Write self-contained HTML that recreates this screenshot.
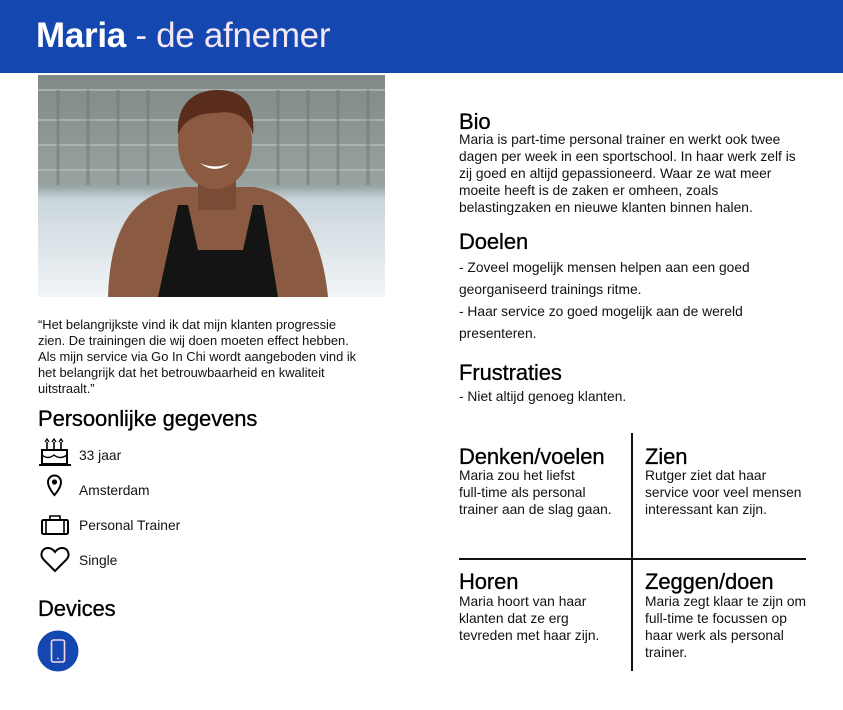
<!DOCTYPE html>
<html><head><meta charset="utf-8"><style>
*{margin:0;padding:0;box-sizing:border-box}
body{width:843px;height:710px;background:#fff;position:relative;overflow:hidden;font-family:"Liberation Sans",sans-serif;color:#111}
.a{position:absolute;white-space:nowrap}
.hd{position:absolute;left:0;top:0;width:843px;height:73px;background:#1447b0}
.t{left:36px;top:16px;font-size:35px;color:#fff;letter-spacing:-0.3px}
.t span{color:#f4e6f4}
.h{font-size:22px;font-weight:normal;color:#000;letter-spacing:-0.1px;-webkit-text-stroke:0.3px #000}
.p{font-size:13.8px;line-height:17px;color:#111}
.q{font-size:12.9px;line-height:16px}
</style></head><body>
<div class="hd"></div>
<div class="a t"><b>Maria</b><span> - de afnemer</span></div>

<svg class="a" style="left:38px;top:75px" width="347" height="222" viewBox="0 0 347 222">
<defs><linearGradient id="bg" x1="0" y1="0" x2="0" y2="1">
<stop offset="0" stop-color="#7f8a86"/><stop offset="0.5" stop-color="#98a3a2"/><stop offset="0.56" stop-color="#c9d5dc"/><stop offset="1" stop-color="#f2f5f7"/></linearGradient></defs>
<rect width="347" height="222" fill="url(#bg)"/>
<g stroke="#b4bdb9" stroke-width="2" opacity="0.7">
<line x1="0" y1="15" x2="347" y2="15"/><line x1="0" y1="45" x2="347" y2="45"/><line x1="0" y1="70" x2="347" y2="70"/><line x1="0" y1="95" x2="347" y2="95"/>
</g>
<g stroke="#6c7672" stroke-width="3" opacity="0.5">
<line x1="20" y1="15" x2="20" y2="110"/><line x1="50" y1="15" x2="50" y2="110"/><line x1="80" y1="15" x2="80" y2="110"/><line x1="110" y1="15" x2="110" y2="110"/><line x1="240" y1="15" x2="240" y2="110"/><line x1="270" y1="15" x2="270" y2="110"/><line x1="300" y1="15" x2="300" y2="110"/><line x1="330" y1="15" x2="330" y2="110"/>
</g>
<path d="M70 222 C72 160 90 115 150 112 L215 112 C265 118 285 170 290 222 Z" fill="#8a5a42"/>
<path d="M120 222 L140 130 L150 130 L160 175 L205 175 L215 130 L225 130 L240 222 Z" fill="#141414"/>
<rect x="160" y="95" width="38" height="40" fill="#7a4c36"/>
<ellipse cx="177" cy="68" rx="37" ry="46" fill="#8c5a40"/>
<path d="M140 60 C138 25 160 15 180 15 C205 15 218 30 215 60 C210 40 195 35 178 38 C160 38 145 45 140 60Z" fill="#5a2c1c"/>
<path d="M162 88 Q177 100 192 88 Q177 95 162 88Z" fill="#fff"/>
</svg>

<div class="a q" style="left:38px;top:317px">“Het belangrijkste vind ik dat mijn klanten progressie<br>zien. De trainingen die wij doen moeten effect hebben.<br>Als mijn service via Go In Chi wordt aangeboden vind ik<br>het belangrijk dat het betrouwbaarheid en kwaliteit<br>uitstraalt.”</div>

<div class="a h" style="left:38px;top:406px">Persoonlijke gegevens</div>

<svg class="a" style="left:38px;top:438px" width="34" height="135" viewBox="0 0 34 135" fill="none" stroke="#000" stroke-width="2">
<path d="M9 4v8M16 4v8M23 4v8" stroke-width="1.6"/><path d="M7 4l2-3 2 3M14 4l2-3 2 3M21 4l2-3 2 3" stroke-width="1.3"/>
<rect x="4" y="12" width="25" height="14"/><path d="M4 17 Q10 22 16 17 Q22 22 29 17" stroke-width="1.4"/><path d="M1 27h32"/>
<path d="M10 44 a6.5 6.5 0 0 1 13 0 c0 6 -6.5 13 -6.5 13 s-6.5 -7 -6.5 -13z"/><circle cx="16.5" cy="44" r="2.6" fill="#000" stroke="none"/>
<rect x="4" y="82" width="26" height="14" rx="1.5"/><path d="M12 82v-4h10v4M8 82v14M26 82v14" stroke-width="1.6"/>
<path d="M17 133 L6 122 C1 117 4 110 10 110 C13 110 15.5 112 17 114 C18.5 112 21 110 24 110 C30 110 33 117 28 122Z"/>
</svg>
<div class="a p" style="left:79px;top:447px">33 jaar</div>
<div class="a p" style="left:79px;top:482px">Amsterdam</div>
<div class="a p" style="left:79px;top:517px">Personal Trainer</div>
<div class="a p" style="left:79px;top:552px">Single</div>

<div class="a h" style="left:38px;top:596px">Devices</div>
<svg class="a" style="left:37px;top:630px" width="42" height="42" viewBox="0 0 42 42">
<circle cx="21" cy="21" r="20.5" fill="#1447b0"/>
<rect x="14.5" y="10" width="13" height="22" rx="2" fill="none" stroke="#f3d8ec" stroke-width="1.6"/>
<circle cx="21" cy="28.5" r="0.9" fill="#f3d8ec"/>
</svg>

<div class="a h" style="left:459px;top:109px">Bio</div>
<div class="a p" style="left:459px;top:131px">Maria is part-time personal trainer en werkt ook twee<br>dagen per week in een sportschool. In haar werk zelf is<br>zij goed en altijd gepassioneerd. Waar ze wat meer<br>moeite heeft is de zaken er omheen, zoals<br>belastingzaken en nieuwe klanten binnen halen.</div>

<div class="a h" style="left:459px;top:229px">Doelen</div>
<div class="a p" style="left:459px;top:257px;line-height:22px">- Zoveel mogelijk mensen helpen aan een goed<br>georganiseerd trainings ritme.<br>- Haar service zo goed mogelijk aan de wereld<br>presenteren.</div>

<div class="a h" style="left:459px;top:360px">Frustraties</div>
<div class="a p" style="left:459px;top:388px">- Niet altijd genoeg klanten.</div>

<div class="a" style="left:631px;top:433px;width:2px;height:238px;background:#111"></div>
<div class="a" style="left:459px;top:558px;width:347px;height:2px;background:#111"></div>

<div class="a h" style="left:459px;top:444px">Denken/voelen</div>
<div class="a p" style="left:459px;top:467px">Maria zou het liefst<br>full-time als personal<br>trainer aan de slag gaan.</div>
<div class="a h" style="left:645px;top:444px">Zien</div>
<div class="a p" style="left:645px;top:467px">Rutger ziet dat haar<br>service voor veel mensen<br>interessant kan zijn.</div>
<div class="a h" style="left:459px;top:569px">Horen</div>
<div class="a p" style="left:459px;top:593px">Maria hoort van haar<br>klanten dat ze erg<br>tevreden met haar zijn.</div>
<div class="a h" style="left:645px;top:569px">Zeggen/doen</div>
<div class="a p" style="left:645px;top:593px">Maria zegt klaar te zijn om<br>full-time te focussen op<br>haar werk als personal<br>trainer.</div>
</body></html>
